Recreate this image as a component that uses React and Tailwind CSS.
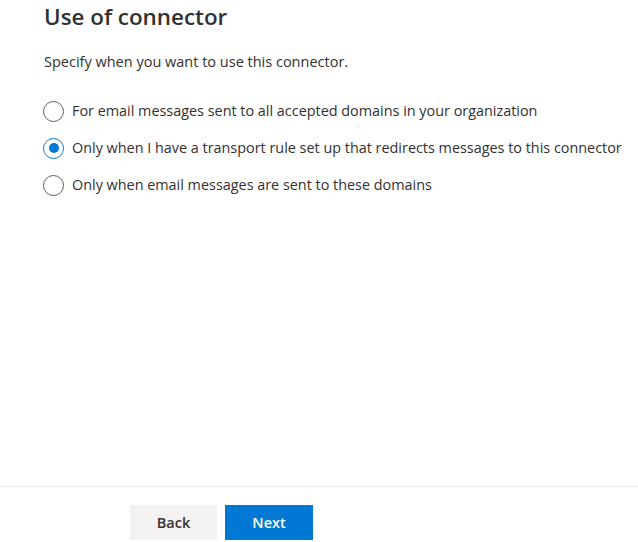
import React, { useState } from "react";

const options = [
  "For email messages sent to all accepted domains in your organization",
  "Only when I have a transport rule set up that redirects messages to this connector",
  "Only when email messages are sent to these domains",
];

export default function App() {
  const [sel, setSel] = useState(1);
  return (
    <div
      className="w-[638px] h-[542px] bg-white flex flex-col text-[#323130] overflow-hidden"
      style={{ fontFamily: '"Open Sans", "Noto Sans", sans-serif' }}
    >
      <div className="flex-1 pl-[44px] pt-[3px]">
        <h1 className="text-[22.4px] leading-[28px] font-semibold">Use of connector</h1>
        <p className="mt-[21px] text-[14.5px] leading-[20px]">Specify when you want to use this connector.</p>
        <div className="mt-[29px] flex flex-col gap-[17px] -ml-[1px]">
          {options.map((o, i) => (
            <label key={i} className="flex items-center gap-[8px] h-[20px] cursor-pointer" onClick={() => setSel(i)}>
              <span
                className={`w-[21px] h-[21px] rounded-full border flex items-center justify-center shrink-0 ${
                  sel === i ? "border-[#0078d4]" : "border-[#605e5c]"
                }`}
              >
                {sel === i && <span className="w-[10px] h-[10px] rounded-full bg-[#0078d4]" />}
              </span>
              <span className="text-[14.4px] leading-[20px]">{o}</span>
            </label>
          ))}
        </div>
      </div>
      <div className="border-t border-[#edebe9] h-[56px] flex items-start pl-[130px] pt-[18px] gap-[8px]">
        <button className="w-[87px] h-[35px] bg-[#f3f2f1] text-[14.5px] font-semibold text-[#323130]">Back</button>
        <button className="w-[88px] h-[35px] bg-[#0078d4] text-[14.5px] font-semibold text-white">Next</button>
      </div>
    </div>
  );
}
